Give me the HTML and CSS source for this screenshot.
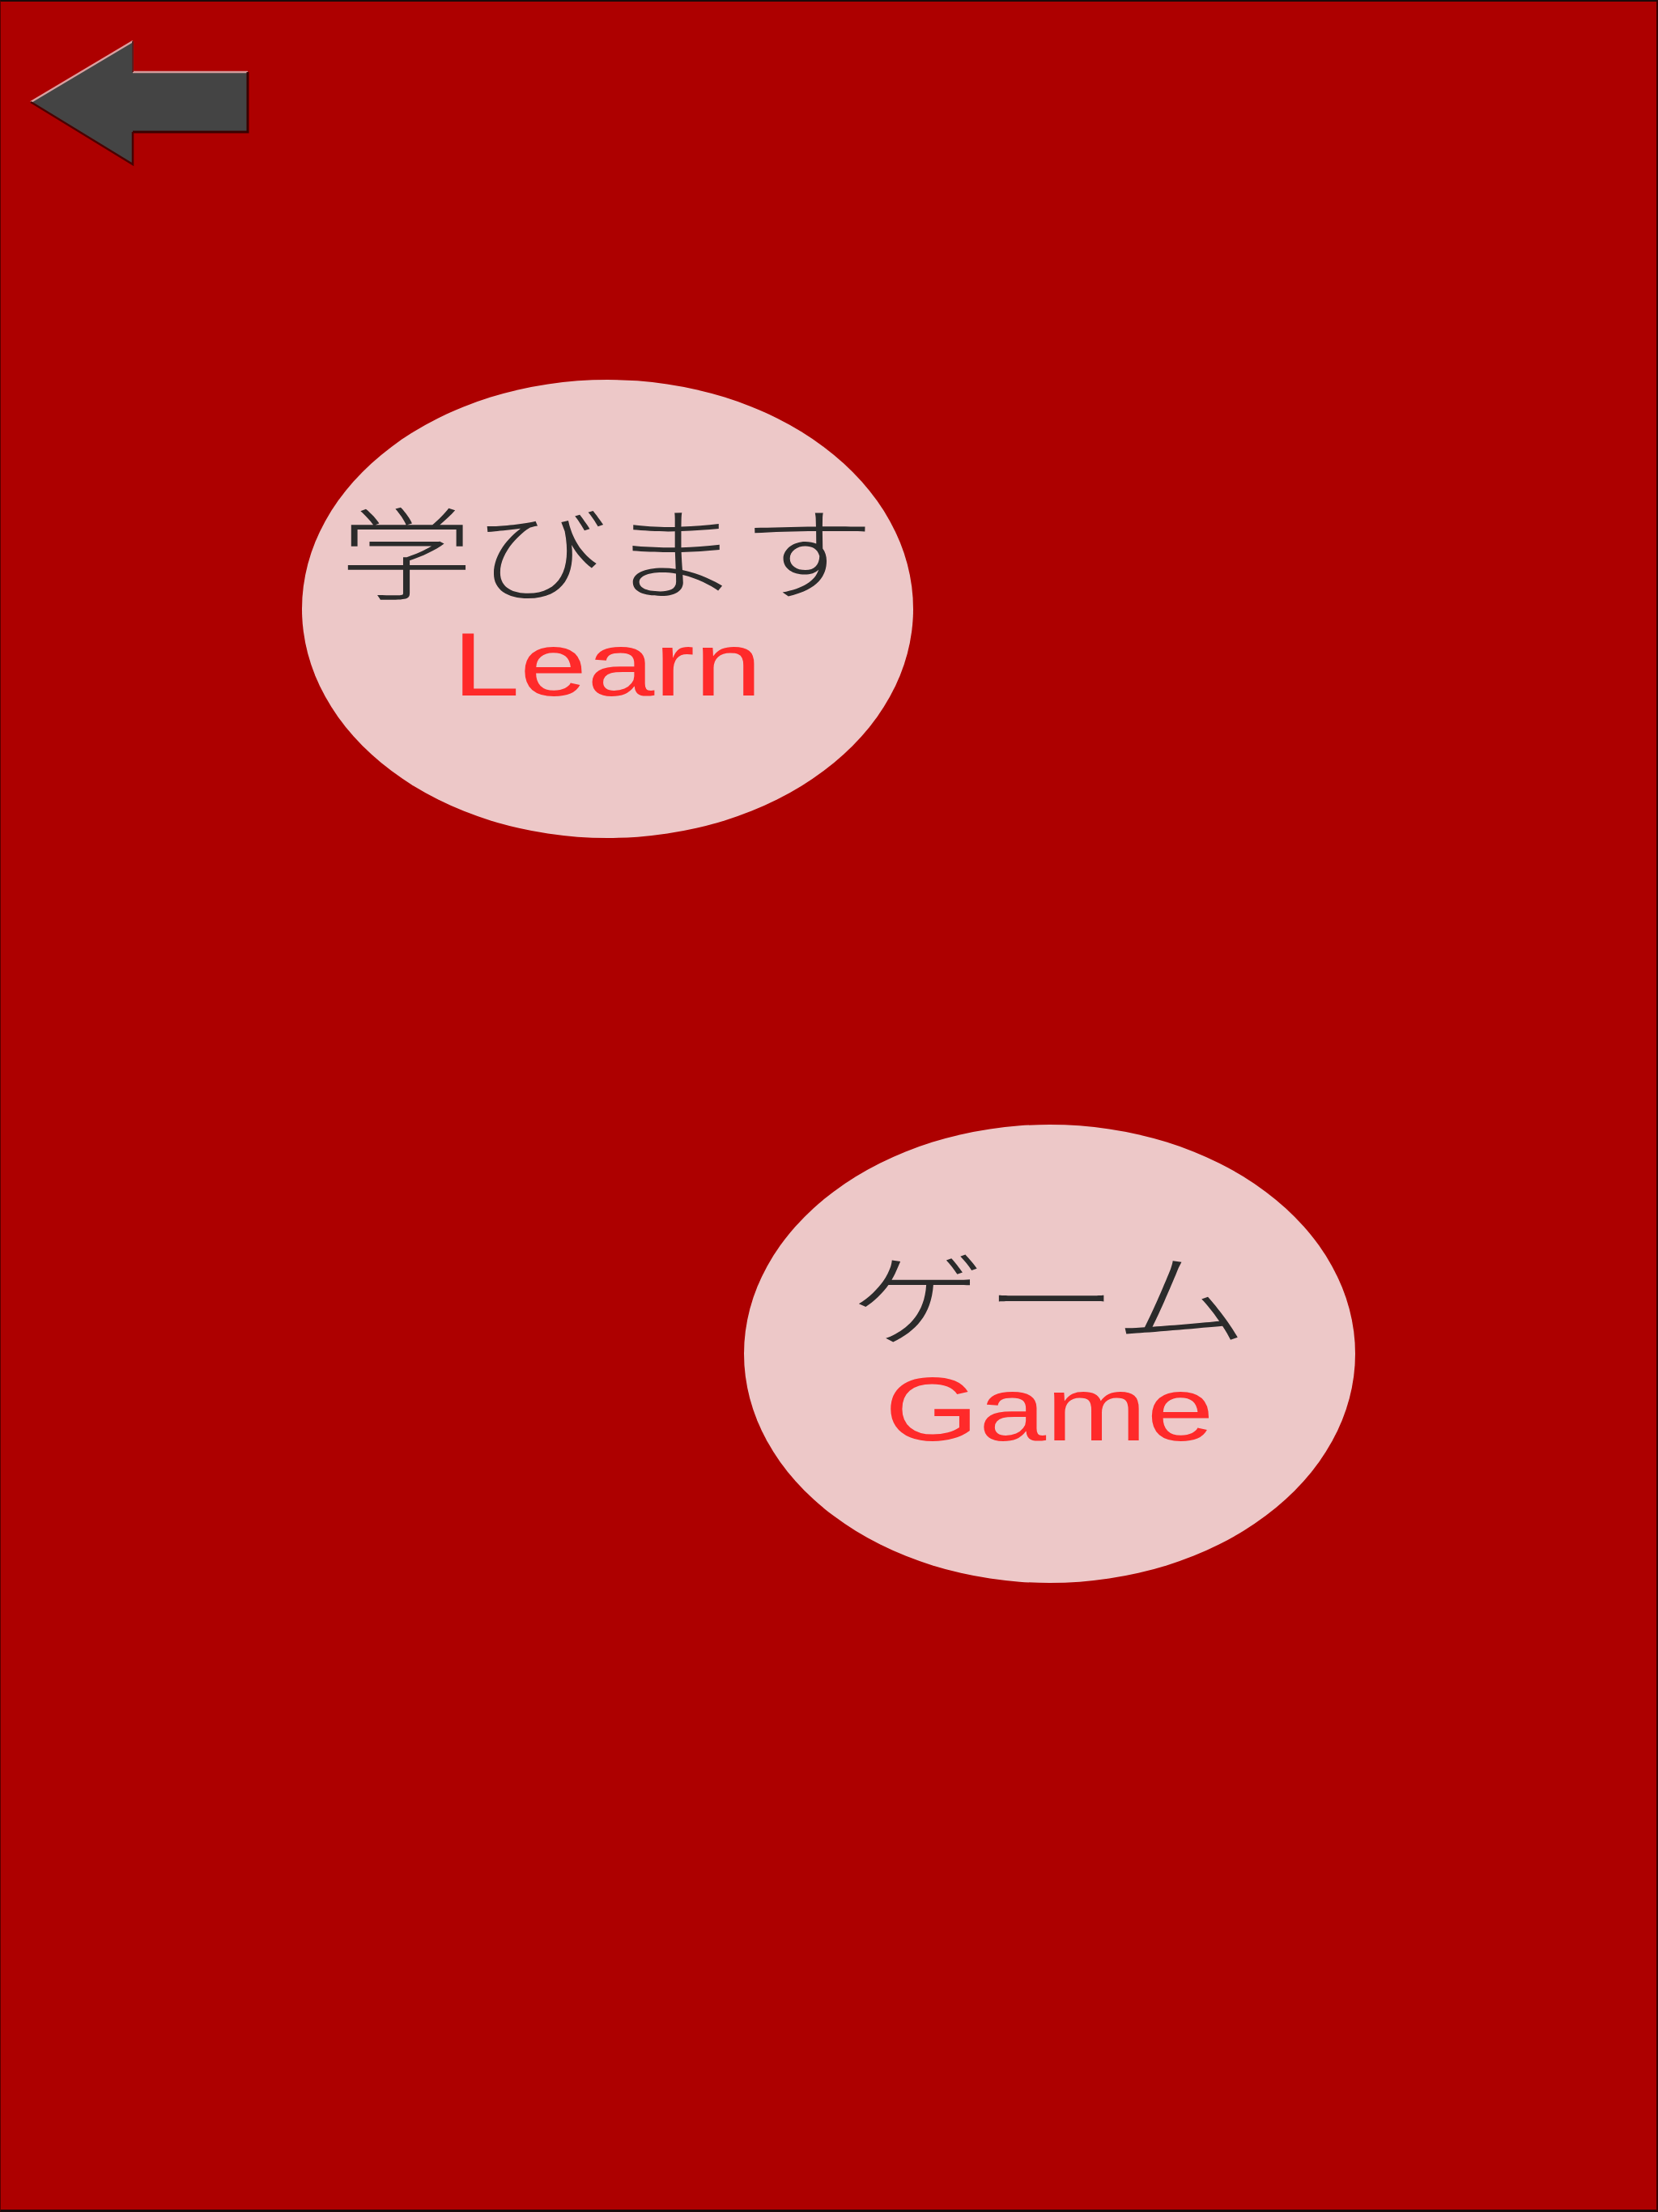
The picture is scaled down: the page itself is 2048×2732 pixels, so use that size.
FILE: index.html
```html
<!DOCTYPE html>
<html lang="ja">
<head>
<meta charset="utf-8">
<title>学びます / ゲーム</title>
<link rel="stylesheet" href="styles.css">
</head>
<body>
<div class="screen">
  <a class="back" href="#" aria-label="Back">
    <svg class="back-icon" width="310" height="210" viewBox="0 0 310 210">
      <polygon points="37,124 163,49 163,87 305,87 305,161 163,161 163,201" fill="#444444"/>
      <polyline points="37,124 163,49" fill="none" stroke="#d9a0a0" stroke-width="2.5"/>
      <polyline points="163,87 305,87" fill="none" stroke="#d49a9a" stroke-width="2.5"/>
      <polyline points="305,87 305,161 163,161" fill="none" stroke="#3a0000" stroke-width="3"/>
      <polyline points="163,161 163,201 37,124" fill="none" stroke="#4a0000" stroke-width="2.5"/>
      <polyline points="163,49 163,87" fill="none" stroke="#5a2020" stroke-width="2"/>
    </svg>
  </a>
  <div class="choices">
    <a class="choice choice-learn" href="#">
      <span class="label">
        <span class="jp">学びます</span>
        <span class="en">Learn</span>
      </span>
    </a>
    <a class="choice choice-game" href="#">
      <span class="label">
        <span class="jp">ゲーム</span>
        <span class="en">Game</span>
      </span>
    </a>
  </div>
</div>
</body>
</html>
```
FILE: styles.css
```css
html, body {
  margin: 0;
  padding: 0;
  background: #1a0000;
}

.screen {
  box-sizing: border-box;
  width: 2048px;
  height: 2732px;
  background: #ad0000;
  border-top: 2px solid #1c0a0a;
  border-right: 2px solid #3a0000;
  border-bottom: 3px solid #1c0a0a;
  border-left: 1px solid #5a0000;
  display: flex;
  flex-direction: column;
  overflow: hidden;
}

.back {
  display: block;
  width: 310px;
  height: 210px;
}

.back-icon {
  display: block;
}

.choices {
  display: flex;
  flex-direction: column;
}

.choice {
  box-sizing: border-box;
  width: 755px;
  height: 566px;
  border-radius: 50%;
  background: #edc8c8;
  display: flex;
  align-items: center;
  justify-content: center;
  text-decoration: none;
}

.choice-learn {
  margin-left: 372px;
  margin-top: 257px;
}

.choice-game {
  margin-left: 918px;
  margin-top: 354px;
}

.label {
  display: flex;
  flex-direction: column;
  align-items: center;
  transform: scaleX(1.334);
  margin-bottom: 24px;
}

.jp {
  font-family: "Noto Sans CJK JP", "Noto Sans", sans-serif;
  font-weight: 300;
  font-size: 124px;
  line-height: 160px;
  color: #2b2b2b;
  white-space: nowrap;
}

.en {
  margin-top: 2px;
  font-family: "Liberation Sans", Arial, sans-serif;
  font-size: 112px;
  line-height: 124px;
  color: #ff2a2a;
  white-space: nowrap;
}
```
